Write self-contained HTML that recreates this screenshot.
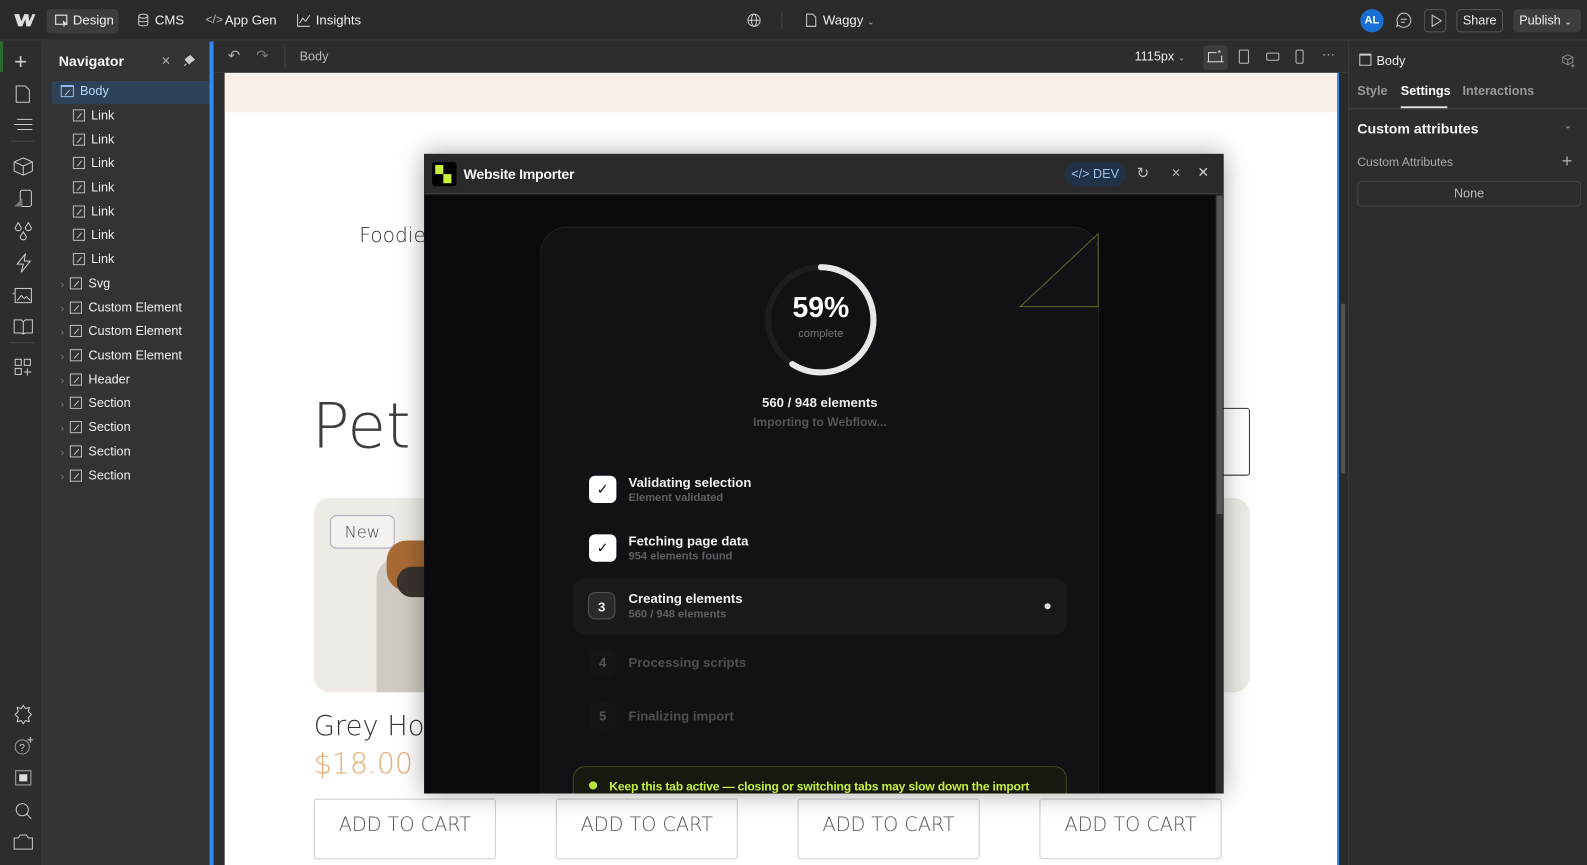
<!DOCTYPE html>
<html><head><meta charset="utf-8"><style>
*{box-sizing:border-box;margin:0;padding:0}
body{width:1587px;height:855px;overflow:hidden;background:#2d2d2d;font-family:"Liberation Sans",sans-serif;position:relative;color:#e6e6e6}
#w{position:absolute;left:0;top:0;width:1568px;height:845px;transform:scale(1.01212);transform-origin:0 0}
.a{position:absolute}
.top{left:0;top:0;width:1568px;height:40px;background:#2a2a2a;border-bottom:1px solid #3c3c3c}
.tb{font-size:13px;color:#f0f0f0;top:12px}
.rail{left:0;top:41px;width:42px;height:814px;background:#2d2d2d;border-right:1px solid #3a3a3a}
.nav{left:42px;top:41px;width:166px;height:814px;background:#333}
.nv{font-size:12.5px;color:#f2f2f2;height:23.7px;line-height:23.7px}
.cb{display:inline-block;width:12px;height:12px;border:1px solid #bbb;vertical-align:-2px;margin-right:6px;position:relative}
.cb:after{content:"";position:absolute;left:2px;top:5px;width:7px;height:1px;background:#bbb;transform:rotate(-50deg)}
.ctb{left:211px;top:41px;width:1121px;height:31px;background:#2d2d2d;border-bottom:1px solid #3a3a3a}
.canvas{left:222px;top:72px;width:1100px;height:783px;background:#fff;overflow:hidden}
.hand{font-family:"DejaVu Sans",sans-serif;color:#444;font-weight:300}
.rp{left:1332px;top:41px;width:236px;height:814px;background:#2d2d2d;border-left:1px solid #3a3a3a}
.btn{border:1px solid #ccc;border-radius:3px;width:180px;height:60px;top:789px;font-size:19px;color:#555;text-align:center;line-height:50px;background:#fff}
.modal{left:419px;top:152px;width:790px;height:632px;background:#0b0b0f;box-shadow:0 0 24px rgba(0,0,0,.35);overflow:hidden}
.mh{left:0;top:0;width:790px;height:40px;background:#2a2a2a;border-bottom:1px solid #444}
.step{left:582px;font-size:13px;font-weight:bold;color:#f2f2f2}
.sub{font-size:11px;color:#5f5f63;font-weight:bold;margin-top:2px}
.ck{left:582px;width:27px;height:27px;border-radius:6px;background:#fff;color:#111;text-align:center;line-height:27px;font-size:14px}
.num{left:582px;width:27px;height:27px;border-radius:7px;background:#151518;color:#555;text-align:center;line-height:27px;font-size:13px;font-weight:bold}
</style></head><body><div id="w">
<div class="a top"></div>
<svg class="a" style="left:13px;top:13px" width="22" height="14" viewBox="0 0 22 14"><path d="M1 1h5l2 7 3-7h4l1 7 3-7h3l-5 12h-4l-1-7-3 7H5z" fill="#ddd"/></svg>
<div class="a" style="left:46px;top:9px;width:71px;height:24px;background:#3d3d3d;border-radius:4px"></div>
<svg class="a" style="left:54px;top:14px" width="14" height="13"><rect x="1" y="1" width="11" height="9" fill="none" stroke="#ddd" stroke-width="1.2"/><path d="M8 6l5 4-3 1-1 2z" fill="#ddd"/></svg>
<div class="a tb" style="left:72px">Design</div>
<svg class="a" style="left:136px;top:13px" width="11" height="14"><ellipse cx="5.5" cy="3" rx="4.5" ry="2" fill="none" stroke="#ccc"/><path d="M1 3v8c0 2 9 2 9 0V3M1 7c0 2 9 2 9 0" fill="none" stroke="#ccc"/></svg>
<div class="a tb" style="left:153px">CMS</div>
<div class="a tb" style="left:203px;color:#bbb;font-size:12px">&lt;/&gt;</div>
<div class="a tb" style="left:222px">App Gen</div>
<svg class="a" style="left:293px;top:13px" width="14" height="14"><path d="M1 1v12h12M3 10l3-5 3 3 4-6" fill="none" stroke="#ccc"/></svg>
<div class="a tb" style="left:312px">Insights</div>
<svg class="a" style="left:738px;top:13px" width="14" height="14"><circle cx="7" cy="7" r="6" fill="none" stroke="#ccc"/><ellipse cx="7" cy="7" rx="2.5" ry="6" fill="none" stroke="#ccc"/><path d="M1 7h12" stroke="#ccc"/></svg>
<div class="a" style="left:772px;top:11px;width:1px;height:18px;background:#444"></div>
<svg class="a" style="left:796px;top:13px" width="11" height="14"><path d="M1 1h6l3 3v9H1z" fill="none" stroke="#ccc"/></svg>
<div class="a tb" style="left:813px">Waggy <span style="font-size:9px;color:#aaa">⌄</span></div>
<div class="a" style="left:1344px;top:9px;width:23px;height:23px;border-radius:50%;background:#1a6fd6;font-size:11px;color:#fff;text-align:center;line-height:23px;font-weight:bold">AL</div>
<svg class="a" style="left:1379px;top:12px" width="16" height="16"><path d="M8 1a7 7 0 1 1-5 12l-2 1 1-3A7 7 0 0 1 8 1z" fill="none" stroke="#ccc"/><path d="M5 7h6M5 10h4" stroke="#ccc"/></svg>
<div class="a" style="left:1407px;top:9px;width:22px;height:23px;border:1px solid #555;border-radius:4px"></div>
<svg class="a" style="left:1413px;top:14px" width="12" height="13"><path d="M2 1l9 5.5L2 12z" fill="none" stroke="#ccc"/></svg>
<div class="a" style="left:1439px;top:9px;width:46px;height:23px;border:1px solid #555;border-radius:4px;font-size:12.5px;text-align:center;line-height:21px;color:#f2f2f2">Share</div>
<div class="a" style="left:1495px;top:9px;width:67px;height:23px;background:#3d3d3d;border-radius:4px;font-size:12.5px;line-height:23px;padding-left:6px;color:#f2f2f2">Publish <span style="font-size:9px">⌄</span></div>

<div class="a rail"></div>
<div class="a" style="left:0;top:41px;width:3px;height:30px;background:#2d6b2d"></div>
<div class="a" style="left:14px;top:48px;color:#ccc;font-size:22px;font-weight:300">+</div>
<svg class="a" style="left:15px;top:84px" width="15" height="18"><path d="M1 1h9l4 4v12H1z" fill="none" stroke="#ccc"/></svg>
<svg class="a" style="left:13px;top:117px" width="20" height="14"><path d="M4 1h15M1 6h18M4 11h15" stroke="#ccc"/></svg>
<div class="a" style="left:10px;top:139px;width:24px;height:1px;background:#444"></div>
<svg class="a" style="left:13px;top:155px" width="20" height="19"><path d="M10 1l9 4v9l-9 4-9-4V5z M1 5l9 4 9-4M10 9v9" fill="none" stroke="#ccc"/></svg>
<svg class="a" style="left:13px;top:187px" width="20" height="19"><rect x="7" y="1" width="11" height="16" rx="2" fill="none" stroke="#ccc"/><path d="M1 17l8-8v8z" fill="#777"/></svg>
<svg class="a" style="left:13px;top:219px" width="20" height="20"><path d="M5 1l3 5a3 3 0 1 1-6 0zM15 1l3 5a3 3 0 1 1-6 0zM10 10l3 5a3 3 0 1 1-6 0z" fill="none" stroke="#ccc"/></svg>
<svg class="a" style="left:13px;top:250px" width="20" height="20"><path d="M12 1L4 11h6l-2 8 9-11h-6z" fill="none" stroke="#ccc"/></svg>
<svg class="a" style="left:11px;top:282px" width="22" height="19"><rect x="4" y="3" width="16" height="14" fill="none" stroke="#ccc"/><path d="M6 15l4-5 3 3 2-2 4 4" fill="none" stroke="#ccc"/><path d="M1 8l3-2v4z" fill="#888"/></svg>
<svg class="a" style="left:13px;top:314px" width="20" height="17"><path d="M1 2h7l2 2 2-2h7v13h-7l-2 1-2-1H1zM10 4v12" fill="none" stroke="#ccc"/></svg>
<div class="a" style="left:10px;top:338px;width:24px;height:1px;background:#444"></div>
<svg class="a" style="left:14px;top:354px" width="18" height="18"><rect x="1" y="1" width="6" height="6" fill="none" stroke="#ccc"/><rect x="10" y="1" width="6" height="6" fill="none" stroke="#ccc"/><rect x="1" y="10" width="6" height="6" fill="none" stroke="#ccc"/><path d="M13 10v7M10 13.5h7" stroke="#ccc"/></svg>
<svg class="a" style="left:13px;top:696px" width="20" height="20"><path d="M10 1l2 3 4-1-1 4 3 3-3 3 1 4-4-1-2 3-2-3-4 1 1-4-3-3 3-3-1-4 4 1z" fill="none" stroke="#ccc"/></svg>
<svg class="a" style="left:13px;top:727px" width="22" height="20"><circle cx="9" cy="11" r="7" fill="none" stroke="#999"/><text x="6" y="15" font-size="10" fill="#ccc">?</text><path d="M17 1v6M14 4h6" stroke="#ccc"/></svg>
<div class="a" style="left:15px;top:761px;width:16px;height:15px;border:1px solid #aaa"><div style="margin:3px;width:8px;height:7px;background:#ddd"></div></div>
<svg class="a" style="left:14px;top:792px" width="18" height="18"><circle cx="8" cy="8" r="6" fill="none" stroke="#ccc"/><path d="M12 12l5 5" stroke="#ccc"/></svg>
<svg class="a" style="left:13px;top:824px" width="20" height="16"><path d="M1 4h4l2-3h6l2 3h4v11H1z" fill="none" stroke="#ccc"/></svg>

<div class="a nav"></div>
<div class="a" style="left:58px;top:52px;font-size:14px;font-weight:bold;color:#f5f5f5">Navigator</div>
<div class="a" style="left:159px;top:52px;font-size:12px;color:#bbb">⨯</div>
<svg class="a" style="left:181px;top:54px" width="12" height="12"><path d="M7 1l4 4-3 2-2 2-4-4 2-2zM3 9l-2 2" fill="#ccc" stroke="#ccc"/></svg>
<div class="a" style="left:51px;top:80px;width:157px;height:23px;background:#2e4257;border-radius:3px"></div>
<div class="a nv" style="left:60px;top:79px;color:#b9d5f5"><span class="cb" style="border-color:#8fbcef;width:13px;border-top-width:2px"></span>Body</div>
<div class="a" style="left:72px;top:103px">
<div class="nv"><span class="cb"></span>Link</div><div class="nv"><span class="cb"></span>Link</div><div class="nv"><span class="cb"></span>Link</div><div class="nv"><span class="cb"></span>Link</div><div class="nv"><span class="cb"></span>Link</div><div class="nv"><span class="cb"></span>Link</div><div class="nv"><span class="cb"></span>Link</div></div>
<div class="a" style="left:60px;top:269px">
<div class="nv"><span style="color:#888;font-size:10px;margin-right:6px">›</span><span class="cb"></span>Svg</div>
<div class="nv"><span style="color:#888;font-size:10px;margin-right:6px">›</span><span class="cb"></span>Custom Element</div>
<div class="nv"><span style="color:#888;font-size:10px;margin-right:6px">›</span><span class="cb"></span>Custom Element</div>
<div class="nv"><span style="color:#888;font-size:10px;margin-right:6px">›</span><span class="cb"></span>Custom Element</div>
<div class="nv"><span style="color:#888;font-size:10px;margin-right:6px">›</span><span class="cb"></span>Header</div>
<div class="nv"><span style="color:#888;font-size:10px;margin-right:6px">›</span><span class="cb"></span>Section</div>
<div class="nv"><span style="color:#888;font-size:10px;margin-right:6px">›</span><span class="cb"></span>Section</div>
<div class="nv"><span style="color:#888;font-size:10px;margin-right:6px">›</span><span class="cb"></span>Section</div>
<div class="nv"><span style="color:#888;font-size:10px;margin-right:6px">›</span><span class="cb"></span>Section</div></div>
<div class="a" style="left:207px;top:41px;width:4px;height:814px;background:#2f8cf0"></div>

<div class="a ctb"></div>
<div class="a" style="left:225px;top:46px;color:#aaa;font-size:15px">↶</div>
<div class="a" style="left:253px;top:46px;color:#777;font-size:15px">↷</div>
<div class="a" style="left:281px;top:46px;width:1px;height:22px;background:#444"></div>
<div class="a" style="left:296px;top:49px;font-size:12.5px;color:#bbb">Body</div>
<div class="a" style="left:1121px;top:49px;font-size:12.5px;color:#eee">1115px <span style="font-size:9px;color:#aaa">⌄</span></div>
<div class="a" style="left:1189px;top:45px;width:24px;height:24px;background:#3d3d3d;border-radius:3px"></div>
<svg class="a" style="left:1192px;top:48px" width="18" height="16"><path d="M2 13V4h8M1 13h16M15 7v6" fill="none" stroke="#ddd"/><text x="11" y="8" font-size="9" fill="#ddd">*</text></svg>
<div class="a" style="left:1224px;top:49px;width:10px;height:14px;border:1px solid #bbb;border-radius:1px"></div>
<div class="a" style="left:1251px;top:52px;width:13px;height:8px;border:1px solid #bbb;border-radius:2px"></div>
<div class="a" style="left:1280px;top:49px;width:8px;height:14px;border:1px solid #bbb;border-radius:2px"></div>
<div class="a" style="left:1306px;top:46px;color:#bbb;font-size:13px">···</div>

<div class="a canvas">
 <div class="a" style="left:0;top:0;width:1100px;height:39px;background:#f9f0ea"></div>
 <div class="a hand" style="left:133px;top:148px;font-size:20px;color:#333">Foodie</div>
 <div class="a hand" style="left:86px;top:312px;font-size:62px;color:#3d3d3d">Pet</div>
 <div class="a" style="left:960px;top:331px;width:53px;height:67px;border:1px solid #333;border-radius:3px"></div>
 <div class="a" style="left:88px;top:420px;width:925px;height:192px;background:#eeebe6;border-radius:16px"></div>
 <div class="a" style="left:150px;top:480px;width:50px;height:132px;background:#cfcac3;border-radius:20px 0 0 0"></div>
 <div class="a" style="left:160px;top:462px;width:40px;height:50px;background:#a86a35;border-radius:20px 0 0 20px"></div>
 <div class="a" style="left:170px;top:488px;width:30px;height:30px;background:#3a332f;border-radius:15px 0 0 15px"></div>
 <div class="a hand" style="left:104px;top:437px;width:64px;height:33px;border:1px solid #aab;border-radius:6px;background:#f4f2ee;font-size:16px;text-align:center;line-height:31px">New</div>
 <div class="a hand" style="left:88px;top:630px;font-size:27px;color:#333">Grey Hoo</div>
 <div class="a hand" style="left:88px;top:666px;font-size:28px;color:#e6ad76">$18.00</div>
</div>
<div class="a btn hand" style="left:310px">ADD TO CART</div>
<div class="a btn hand" style="left:549px">ADD TO CART</div>
<div class="a btn hand" style="left:788px">ADD TO CART</div>
<div class="a btn hand" style="left:1027px">ADD TO CART</div>
<div class="a" style="left:1321px;top:72px;width:2px;height:783px;background:#2f8cf0"></div>
<div class="a" style="left:1323px;top:72px;width:9px;height:783px;background:#2b2b2b"></div>
<div class="a" style="left:1325px;top:300px;width:4px;height:168px;background:#555;border-radius:2px"></div>

<div class="a modal">
 <div class="a mh"></div>
 <div class="a" style="left:8px;top:8px;width:24px;height:24px;background:#000;border-radius:3px"></div>
 <div class="a" style="left:11px;top:11px;width:8px;height:9px;background:#c8f03c"></div>
 <div class="a" style="left:19px;top:20px;width:8px;height:9px;background:#c8f03c"></div>
 <div class="a" style="left:39px;top:12px;font-size:14px;font-weight:bold;color:#f5f5f5;letter-spacing:-.3px">Website Importer</div>
 <div class="a" style="left:633px;top:8px;width:60px;height:24px;border-radius:12px;background:#1f3247;color:#9cc4ee;font-size:12.5px;line-height:24px;text-align:center">&lt;/&gt; DEV</div>
 <div class="a" style="left:704px;top:10px;font-size:15px;color:#bbb">↻</div>
 <div class="a" style="left:738px;top:11px;font-size:12px;color:#bbb">⨯</div>
 <div class="a" style="left:764px;top:10px;font-size:14px;color:#ccc">✕</div>
 <div class="a" style="left:782px;top:41px;width:8px;height:591px;background:#2a2a2a"></div>
 <div class="a" style="left:783px;top:41px;width:6px;height:315px;background:#555"></div>
 <div class="a" style="left:115px;top:72px;width:552px;height:600px;border:1px solid #202024;border-radius:26px;background:#111116"></div>
 <svg class="a" style="left:587px;top:78px" width="80" height="74"><path d="M79 1L2 73h77z" fill="none" stroke="#5a6a1e"/></svg>
 <svg class="a" style="left:334px;top:106px" width="116" height="116" viewBox="0 0 116 116"><circle cx="58" cy="58" r="52" fill="none" stroke="#1d1d21" stroke-width="6"/><circle cx="58" cy="58" r="52" fill="none" stroke="#e8e8e8" stroke-width="6" stroke-linecap="round" stroke-dasharray="193 400" transform="rotate(-90 58 58)"/></svg>
 <div class="a" style="left:334px;top:136px;width:116px;text-align:center;font-size:28px;font-weight:bold;color:#fff">59%</div>
 <div class="a" style="left:334px;top:172px;width:116px;text-align:center;font-size:11px;color:#777">complete</div>
 <div class="a" style="left:291px;top:238px;width:200px;text-align:center;font-size:13px;font-weight:bold;color:#eee">560 / 948 elements</div>
 <div class="a" style="left:291px;top:258px;width:200px;text-align:center;font-size:12px;font-weight:bold;color:#555">Importing to Webflow...</div>
 <div class="a ck" style="left:163px;top:318px">✓</div>
 <div class="a step" style="left:202px;top:317px">Validating selection<div class="sub">Element validated</div></div>
 <div class="a ck" style="left:163px;top:376px">✓</div>
 <div class="a step" style="left:202px;top:375px">Fetching page data<div class="sub">954 elements found</div></div>
 <div class="a" style="left:147px;top:419px;width:488px;height:56px;background:#19191d;border-radius:12px"></div>
 <div class="a num" style="left:162px;top:433px;background:#2a2a2e;border:1px solid #555;color:#eee">3</div>
 <div class="a step" style="left:202px;top:432px">Creating elements<div class="sub">560 / 948 elements</div></div>
 <div class="a" style="left:613px;top:444px;width:6px;height:6px;border-radius:50%;background:#ddd"></div>
 <div class="a num" style="left:163px;top:489px">4</div>
 <div class="a step" style="left:202px;top:495px;color:#4e4e52">Processing scripts</div>
 <div class="a num" style="left:163px;top:542px">5</div>
 <div class="a step" style="left:202px;top:548px;color:#4e4e52">Finalizing import</div>
 <div class="a" style="left:147px;top:605px;width:488px;height:50px;border:1px solid #3c4a14;border-radius:12px;background:#16190f"></div>
 <div class="a" style="left:163px;top:620px;width:8px;height:8px;border-radius:50%;background:#b5e83c"></div>
 <div class="a" style="left:183px;top:618px;font-size:12px;font-weight:bold;color:#c4f03c;letter-spacing:-.2px">Keep this tab active — closing or switching tabs may slow down the import</div>
</div>

<div class="a rp"></div>
<div class="a" style="left:1343px;top:53px;width:12px;height:12px;border:1px solid #ccc;border-top-width:2px"></div>
<div class="a" style="left:1360px;top:53px;font-size:12.5px;color:#f0f0f0">Body</div>
<svg class="a" style="left:1543px;top:53px" width="15" height="15"><path d="M6 1l5 2.5v5L6 11 1 8.5v-5zM1 3.5L6 6l5-2.5M6 6v5" fill="none" stroke="#888"/><path d="M11 10v4M9 12h4" stroke="#888"/></svg>
<div class="a" style="left:1341px;top:83px;font-size:12.5px;color:#999;font-weight:bold">Style</div>
<div class="a" style="left:1384px;top:83px;font-size:12.5px;color:#fff;font-weight:bold">Settings</div>
<div class="a" style="left:1384px;top:105px;width:46px;height:2px;background:#ddd"></div>
<div class="a" style="left:1445px;top:83px;font-size:12.5px;color:#999;font-weight:bold">Interactions</div>
<div class="a" style="left:1333px;top:107px;width:235px;height:1px;background:#444"></div>
<div class="a" style="left:1341px;top:119px;font-size:14px;font-weight:bold;color:#f5f5f5">Custom attributes</div>
<div class="a" style="left:1545px;top:119px;font-size:10px;color:#aaa">⌄</div>
<div class="a" style="left:1341px;top:153px;font-size:12px;color:#aaa">Custom Attributes</div>
<div class="a" style="left:1543px;top:149px;font-size:18px;color:#aaa">+</div>
<div class="a" style="left:1341px;top:179px;width:221px;height:25px;border:1px solid #444;border-radius:4px;text-align:center;line-height:23px;font-size:12.5px;color:#bbb">None</div>
</div></body></html>
